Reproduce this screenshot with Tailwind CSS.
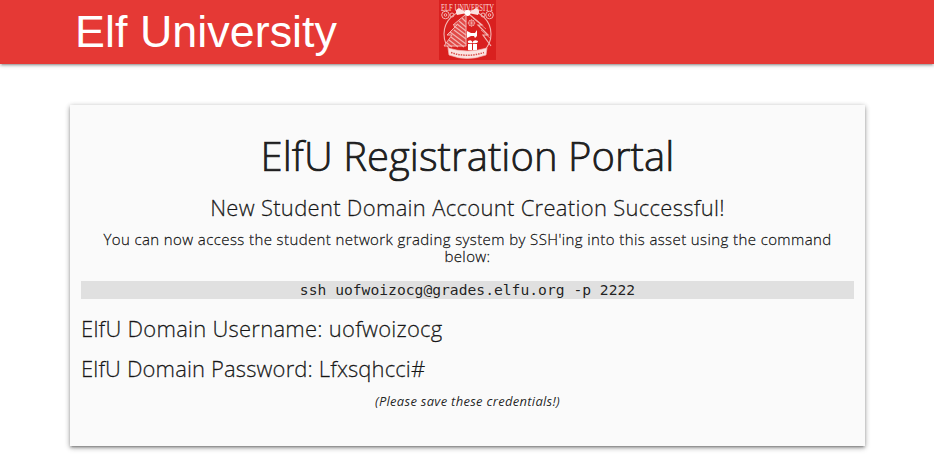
<!DOCTYPE html>
<html lang="en">
<head>
<meta charset="utf-8">
<title>ElfU Registration Portal</title>
<script src="https://cdn.jsdelivr.net/npm/@tailwindcss/browser@4"></script>
</head>
<body class="h-[468px] overflow-hidden bg-white font-['Open_Sans','Noto_Sans',sans-serif] text-black/87">
<nav class="relative z-10 grid h-16 grid-cols-[439px_57px_1fr] bg-[#e53935] shadow-[0_2px_2px_0_rgba(0,0,0,0.14),0_3px_1px_-2px_rgba(0,0,0,0.12),0_1px_5px_0_rgba(0,0,0,0.2)]">
  <a class="pl-[75px] font-['Liberation_Sans',sans-serif] text-[44.8px] leading-[63px] tracking-[0.05px] whitespace-nowrap text-white">Elf University</a>
  <svg class="h-[60px] w-[57px]" viewBox="0 0 57 60" fill="none" stroke="#f3b5b2">
    <rect width="57" height="60" fill="#d9201f" stroke="none"/>
    <text x="28.5" y="10.5" text-anchor="middle" textLength="53" lengthAdjust="spacingAndGlyphs" font-family="Liberation Serif, serif" font-size="11" fill="#fbd5d3" stroke="none">ELF UNIVERSITY</text>
    <circle cx="28.5" cy="34" r="23.5" stroke-width="1.1"/>
    <g stroke-width="1">
      <circle cx="6.5" cy="15" r="3.8"/><circle cx="6.5" cy="15" r="1.3"/>
      <circle cx="50.5" cy="15" r="3.8"/><circle cx="50.5" cy="15" r="1.3"/>
      <circle cx="13" cy="15" r="2"/><circle cx="44" cy="15" r="2"/>
    </g>
    <path d="M28 13 L20 8 Q15 10 18 15Z M29 13 L37 8 Q42 10 39 15Z" fill="#fbe3e1" stroke="none"/>
    <circle cx="28.5" cy="13" r="3" fill="#fff" stroke="none"/>
    <path d="M26 15 L14 25 H18 L8 35 H13 L5 46 H27 V15Z" fill="#e14b48" stroke-width="1"/>
    <path d="M18 24 L27 31 M15 26 L27 35 M15 30 L27 39 M11 32 L27 44 M12 37 L25 47 M10 40 L19 47 M8 43 L13 47 M20 21 L27 27 M23 18 L27 22" stroke-width="1.2"/>
    <path d="M31 15 L43 25 H39 L49 35 H44 L52 46" stroke-width="1.2"/>
    <path d="M34 18 L47 29 M42 30 L52 39" stroke-width=".7"/>
    <circle cx="32.5" cy="23" r="3" stroke-width=".8"/>
    <path d="M32.5 19 V27 M28.5 23 H36.5 M30 20 L35 26 M35 20 L30 26" stroke-width=".6"/>
    <path d="M28 31 L32 33 H36 L38 30 V36 L36 38 L35 36 H32 L28 38Z M29 44 H38 V50 H29Z M33.5 43 Q28 44 29 41 Q33 39 33.5 43 Q34 39 39 41 Q39 44 33.5 43Z" fill="#fff" stroke="none"/>
    <path d="M33.5 43 V51" stroke="#d9201f" stroke-width="1"/>
    <path d="M9 48 Q28 54 48 48 L47 55 Q28 62 10 55Z" fill="#fbe3e1" stroke-width=".7"/>
    <path d="M12 52.5 Q28 58 45 52.5" stroke="#d9504d" stroke-width="1.5" stroke-dasharray="1.5 1"/>
  </svg>
</nav>
<main class="mt-[41px] ml-[70px] h-[341px] w-[795px] bg-[#fafafa] px-[11px] pt-[28px] text-center font-light shadow-[0_2px_2px_0_rgba(0,0,0,0.14),0_3px_1px_-2px_rgba(0,0,0,0.12),0_1px_5px_0_rgba(0,0,0,0.2),0_2px_6px_rgba(0,0,0,0.2)]">
  <h3 class="h-[46px] text-[40px] leading-[46px] tracking-[0.05px] whitespace-nowrap [-webkit-text-stroke:0.7px]">ElfU Registration Portal</h3>
  <h5 class="mt-[16px] h-[25px] text-[22px] leading-[25px] tracking-[0.3px] whitespace-nowrap [-webkit-text-stroke:0.3px]">New Student Domain Account Creation Successful!</h5>
  <p class="mt-[11px] text-[15px] leading-[17px] tracking-[0.4px] whitespace-nowrap [-webkit-text-stroke:0.3px]">You can now access the student network grading system by SSH'ing into this asset using the command<br>below:</p>
  <pre class="mt-[16px] h-[18px] bg-[#e0e0e0] font-['DejaVu_Sans_Mono',monospace] text-[14.67px] leading-[18px] font-normal">ssh uofwoizocg@grades.elfu.org -p 2222</pre>
  <h5 class="mt-[17px] h-[25px] text-left text-[22px] leading-[25px] tracking-[0.25px] [-webkit-text-stroke:0.3px]">ElfU Domain Username: uofwoizocg</h5>
  <h5 class="mt-[15px] h-[25px] text-left text-[22px] leading-[25px] tracking-[0.13px] [-webkit-text-stroke:0.3px]">ElfU Domain Password: Lfxsqhcci#</h5>
  <p class="mt-[11px] text-[13px] leading-[18px] font-normal tracking-[0.29px] italic">(Please save these credentials!)</p>
</main>
</body>
</html>
